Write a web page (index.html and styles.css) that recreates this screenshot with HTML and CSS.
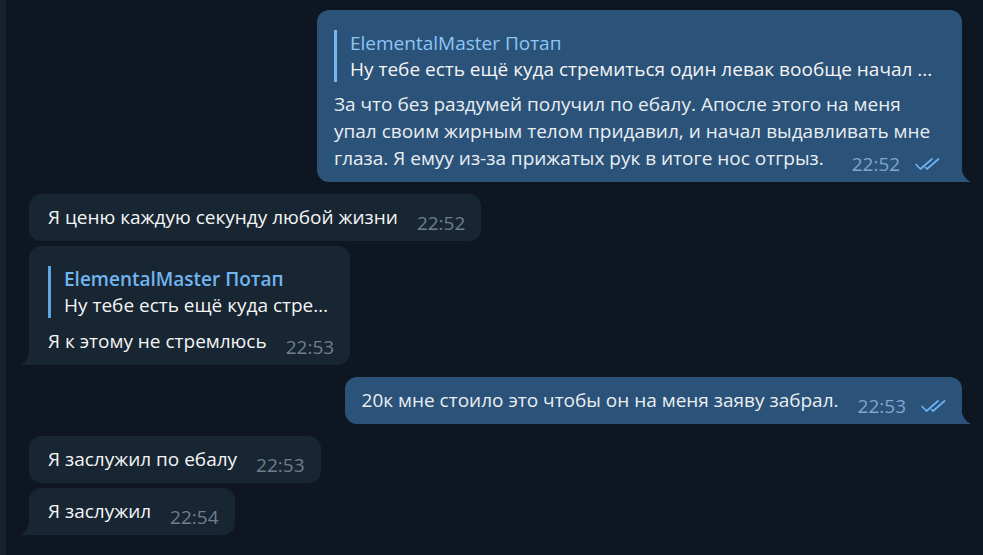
FILE: index.html
```html
<!DOCTYPE html>
<html lang="ru">
<head>
    <meta charset="UTF-8">
    <meta name="viewport" content="width=device-width, initial-scale=1.0">
    <title>Chat</title>
    <link rel="stylesheet" href="styles.css">
</head>
<body>

    <div class="app">
        <div class="side-edge"></div>

        <div class="history">

            <div class="msg out">
                <div class="bubble">
                    <div class="reply">
                        <div class="reply-name">ElementalMaster Потап</div>
                        <div class="reply-text">Ну тебе есть ещё куда стремиться один левак вообще начал ...</div>
                    </div>
                    <div class="text">За что без раздумей получил по ебалу. Апосле этого на меня упал своим жирным телом придавил, и начал выдавливать мне глаза. Я емуу из-за прижатых рук в итоге нос отгрыз.<span class="meta meta-end"><span class="time">22:52</span><svg class="checks" viewBox="0 0 28 14"><path d="M2 7.5 L6.5 12 L18 2"/><path d="M11.5 10.5 L13 12 L24.5 2"/></svg></span></div>
                    <svg class="tail" viewBox="0 0 10 18"><path d="M0 0 C0 9 4 15 10 18 H0 Z"/></svg>
                </div>
            </div>

            <div class="msg in grouped">
                <div class="bubble">
                    <div class="text">Я ценю каждую секунду любой жизни<span class="meta"><span class="time">22:52</span></span></div>
                </div>
            </div>

            <div class="msg in last">
                <div class="bubble">
                    <div class="reply">
                        <div class="reply-name">ElementalMaster Потап</div>
                        <div class="reply-text">Ну тебе есть ещё куда стремиться один левак вообще начал</div>
                    </div>
                    <div class="text">Я к этому не стремлюсь<span class="meta"><span class="time">22:53</span></span></div>
                    <svg class="tail" viewBox="0 0 10 18"><path d="M10 0 C10 9 6 15 0 18 H10 Z"/></svg>
                </div>
            </div>

            <div class="msg out">
                <div class="bubble">
                    <div class="text">20к мне стоило это чтобы он на меня заяву забрал.<span class="meta"><span class="time">22:53</span><svg class="checks" viewBox="0 0 28 14"><path d="M2 7.5 L6.5 12 L18 2"/><path d="M11.5 10.5 L13 12 L24.5 2"/></svg></span></div>
                    <svg class="tail" viewBox="0 0 10 18"><path d="M0 0 C0 9 4 15 10 18 H0 Z"/></svg>
                </div>
            </div>

            <div class="msg in grouped">
                <div class="bubble">
                    <div class="text">Я заслужил по ебалу<span class="meta"><span class="time">22:53</span></span></div>
                </div>
            </div>

            <div class="msg in last">
                <div class="bubble">
                    <div class="text">Я заслужил<span class="meta"><span class="time">22:54</span></span></div>
                    <svg class="tail" viewBox="0 0 10 18"><path d="M10 0 C10 9 6 15 0 18 H10 Z"/></svg>
                </div>
            </div>

        </div>
    </div>

</body>
</html>
```

FILE: styles.css
```css
/* Basic reset */
* {
    margin: 0;
    padding: 0;
    box-sizing: border-box;
}

body {
    font-family: "Open Sans", "Noto Sans", sans-serif;
    background-color: #0e1621;
    color: #f5f5f5;
    width: 983px;
    height: 555px;
    overflow: hidden;
}

.app {
    display: flex;
    height: 555px;
}

.side-edge {
    width: 6px;
    background-color: #17212b;
    flex-shrink: 0;
}

.history {
    flex: 1;
    display: flex;
    flex-direction: column;
    padding: 10px 21px 0 23px;
}

.msg {
    display: flex;
    margin-bottom: 12px;
}

.msg.in {
    justify-content: flex-start;
}

.msg.out {
    justify-content: flex-end;
}

.msg.grouped {
    margin-bottom: 5px;
}

.bubble {
    position: relative;
    max-width: 645px;
    border-radius: 12px;
    font-size: 19px;
    line-height: 27px;
}

.in .bubble {
    background-color: #182533;
    padding: 10px 16px 10px 19px;
}

.out .bubble {
    background-color: #2b5278;
    padding: 10px 14px 10px 17px;
    border-bottom-right-radius: 0;
    font-stretch: 95%;
}

.in.last .bubble {
    border-bottom-left-radius: 0;
}

/* reply quote */
.reply {
    width: 0;
    min-width: 100%;
    margin: 10px 0 9px;
    padding-left: 13px;
    border-left: 3px solid #5fa6e0;
    line-height: 26px;
}

.in .reply {
    margin-bottom: 10px;
}

.out .reply {
    border-left-color: #77b7ee;
}

.reply-name {
    color: #71b5ef;
    font-weight: 600;
    white-space: nowrap;
    overflow: hidden;
}

.out .reply-name {
    color: #8cc6f7;
    font-weight: 500;
}

.reply-text {
    white-space: nowrap;
    overflow: hidden;
    text-overflow: ellipsis;
}

.out .text {
    color: #e9eef3;
}

/* time + checks */
.meta {
    display: inline-flex;
    align-items: center;
    gap: 14px;
    margin-left: 19px;
    vertical-align: -6px;
    line-height: 14px;
    white-space: nowrap;
}

.meta-end {
    margin-left: 28px;
}

.time {
    color: #6d7f8f;
}

.out .time {
    color: #7ea7cf;
}

.checks {
    width: 28px;
    height: 14px;
    fill: none;
    stroke: #6cb3f2;
    stroke-width: 1.7;
    stroke-linecap: round;
    stroke-linejoin: round;
}

/* bubble tail */
.tail {
    position: absolute;
    bottom: 0;
    width: 10px;
    height: 18px;
}

.in .tail {
    left: -9px;
    fill: #182533;
}

.out .tail {
    right: -9px;
    fill: #2b5278;
}
```
